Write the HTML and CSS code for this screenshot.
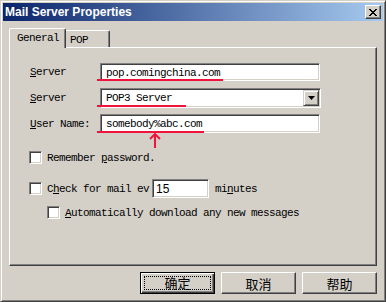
FILE: index.html
```html
<!DOCTYPE html>
<html lang="en">
<head>
    <meta charset="UTF-8">
    <title>Mail Server Properties</title>
    <link rel="stylesheet" href="styles.css">
</head>
<body>

    <div class="window">
        <div class="titlebar">
            <span class="title">Mail Server Properties</span>
            <span class="close">
                <svg width="8" height="7" viewBox="0 0 8 7">
                    <path d="M0 0h2v1h1v1h2v-1h1v-1h2v1h-1v1h-1v1h-1v1h1v1h1v1h1v1h-2v-1h-1v-1h-2v1h-1v1h-2v-1h1v-1h1v-1h1v-1h-1v-1h-1v-1h-1z" fill="#000"/>
                </svg>
            </span>
        </div>

        <div class="content">
            <div class="tabs">
                <div class="tab active">General</div>
                <div class="tab">POP</div>
            </div>

            <div class="panel">
                <div class="row row-server">
                    <label class="label"><u>S</u>erver</label>
                    <div class="field">
                        <div class="textbox">pop.comingchina.com</div>
                        <span class="mark mark-1"></span>
                    </div>
                </div>

                <div class="row row-type">
                    <label class="label"><u>S</u>erver</label>
                    <div class="field">
                        <div class="textbox combo">
                            <span class="combo-text">POP3 Server</span>
                            <span class="combo-btn">
                                <svg width="7" height="4" viewBox="0 0 7 4"><path d="M0 0h7l-3.5 4z" fill="#000"/></svg>
                            </span>
                        </div>
                        <span class="mark mark-2"></span>
                    </div>
                </div>

                <div class="row row-user">
                    <label class="label"><u>U</u>ser Name:</label>
                    <div class="field">
                        <div class="textbox tall">somebody%abc.com</div>
                        <span class="mark mark-3"></span>
                        <svg class="arrow" width="12" height="15" viewBox="0 0 12 15">
                            <path d="M6 1v14M1 6l5-5 5 5" stroke="#f0143c" stroke-width="2" fill="none"/>
                        </svg>
                    </div>
                </div>

                <div class="check check-remember">
                    <span class="box"></span>
                    <span>Remember <u>p</u>assword.</span>
                </div>

                <div class="check check-mail">
                    <span class="box"></span>
                    <span>C<u>h</u>eck for mail ev</span>
                    <div class="textbox minutes">15</div>
                    <span class="after">mi<u>n</u>utes</span>
                </div>

                <div class="check check-auto">
                    <span class="box"></span>
                    <span><u>A</u>utomatically download any new messages</span>
                </div>
            </div>

            <div class="buttons">
                <button class="btn default"><span class="focus">确定</span></button>
                <button class="btn">取消</button>
                <button class="btn">帮助</button>
            </div>
        </div>
    </div>

</body>
</html>
```

FILE: styles.css
```css
body {
    margin: 0;
    padding: 0;
    background-color: #d4d0c8;
    font-family: "Liberation Mono", "DejaVu Sans Mono", monospace;
    font-size: 11px;
    letter-spacing: -0.6px;
    color: #000;
}

.window {
    width: 386px;
    height: 302px;
    box-sizing: border-box;
    padding: 2px;
    border: 1px solid;
    border-color: #d4d0c8 #404040 #404040 #d4d0c8;
    box-shadow: inset 1px 1px #fff, inset -1px -1px #808080;
    background-color: #d4d0c8;
}

.titlebar {
    height: 18px;
    display: flex;
    align-items: center;
    justify-content: space-between;
    background: linear-gradient(to right, #0a246a, #a6caf0);
    padding: 0 2px 0 2px;
}

.title {
    font-family: "Liberation Sans", Arial, sans-serif;
    font-weight: bold;
    font-size: 12px;
    letter-spacing: 0;
    color: #fff;
}

.close {
    width: 16px;
    height: 14px;
    box-sizing: border-box;
    display: flex;
    align-items: center;
    justify-content: center;
    background-color: #d4d0c8;
    border: 1px solid;
    border-color: #fff #404040 #404040 #fff;
    box-shadow: inset -1px -1px #808080;
}

.content {
    padding: 7px 6px 0 6px;
}

.tabs {
    display: flex;
    height: 19px;
    align-items: flex-end;
    position: relative;
    z-index: 1;
}

.tab {
    box-sizing: border-box;
    height: 17px;
    width: 46px;
    padding: 3px 0 0 5px;
    border: 1px solid;
    border-bottom: none;
    border-color: #fff #404040 #404040 #fff;
    box-shadow: inset -1px 0 #808080;
    border-radius: 2px 2px 0 0;
    background-color: #d4d0c8;
    margin-left: -2px;
}

.tab.active {
    width: 57px;
    height: 20px;
    margin-left: 0;
    margin-bottom: -1px;
    padding: 3px 0 0 7px;
    position: relative;
    z-index: 2;
}

.panel {
    position: relative;
    box-sizing: border-box;
    height: 219px;
    width: 368px;
    padding: 15px 0 0 19px;
    border: 1px solid;
    border-color: #fff #404040 #404040 #fff;
    box-shadow: inset -1px -1px #808080;
}

.row {
    display: flex;
    align-items: center;
}

.row-type {
    margin-top: 7px;
}

.row-user {
    margin-top: 6px;
}

.label {
    width: 70px;
    padding-left: 1px;
}

.field {
    position: relative;
}

.textbox {
    box-sizing: border-box;
    width: 220px;
    height: 18px;
    padding: 1px 0 0 5px;
    display: flex;
    align-items: center;
    background-color: #fff;
    border: 1px solid;
    border-color: #808080 #fff #fff #808080;
    box-shadow: inset 1px 1px #404040, inset -1px -1px #d4d0c8;
}

.textbox.tall {
    height: 19px;
}

.combo {
    height: 20px;
    width: 221px;
    justify-content: space-between;
    padding: 0 1px 0 5px;
}

.combo-btn {
    width: 16px;
    height: 16px;
    box-sizing: border-box;
    display: flex;
    align-items: center;
    justify-content: center;
    background-color: #d4d0c8;
    border: 1px solid;
    border-color: #d4d0c8 #404040 #404040 #d4d0c8;
    box-shadow: inset 1px 1px #fff, inset -1px -1px #808080;
}

.mark {
    position: absolute;
    left: -3px;
    bottom: 0;
    height: 2px;
    background-color: #f0143c;
}

.mark-1 {
    width: 126px;
}

.mark-2 {
    width: 89px;
    bottom: 1px;
}

.mark-3 {
    width: 107px;
}

.arrow {
    position: absolute;
    left: 49px;
    top: 19px;
}

.check {
    display: flex;
    align-items: center;
    gap: 5px;
}

.check-remember {
    margin-top: 18px;
}

.check-mail {
    margin-top: 15px;
}

.check-auto {
    margin-top: 8px;
    margin-left: 18px;
}

.box {
    width: 13px;
    height: 13px;
    box-sizing: border-box;
    background-color: #fff;
    border: 1px solid;
    border-color: #808080 #fff #fff #808080;
    box-shadow: inset 1px 1px #404040, inset -1px -1px #d4d0c8;
}

.minutes {
    width: 57px;
    height: 19px;
    margin-left: -2px;
    padding-left: 3px;
    font-family: "Liberation Sans", Arial, sans-serif;
    font-size: 12px;
    letter-spacing: 0;
}

.after {
    margin-left: 1px;
}

.buttons {
    display: flex;
    justify-content: flex-end;
    gap: 6px;
    margin-top: 6px;
}

.btn {
    width: 75px;
    height: 22px;
    box-sizing: border-box;
    padding: 0;
    font-family: "Noto Sans CJK SC", sans-serif;
    font-size: 13px;
    letter-spacing: 0;
    color: #000;
    background-color: #d4d0c8;
    border: 1px solid;
    border-color: #fff #404040 #404040 #fff;
    box-shadow: inset -1px -1px #808080;
    display: flex;
    align-items: center;
    justify-content: center;
}

.btn.default {
    border-color: #000;
    box-shadow: inset 1px 1px #fff, inset -1px -1px #404040, inset -2px -2px #808080;
}

.focus {
    box-sizing: border-box;
    width: 67px;
    height: 14px;
    border: 1px dotted #000;
    display: flex;
    align-items: center;
    justify-content: center;
    line-height: 12px;
}
```
